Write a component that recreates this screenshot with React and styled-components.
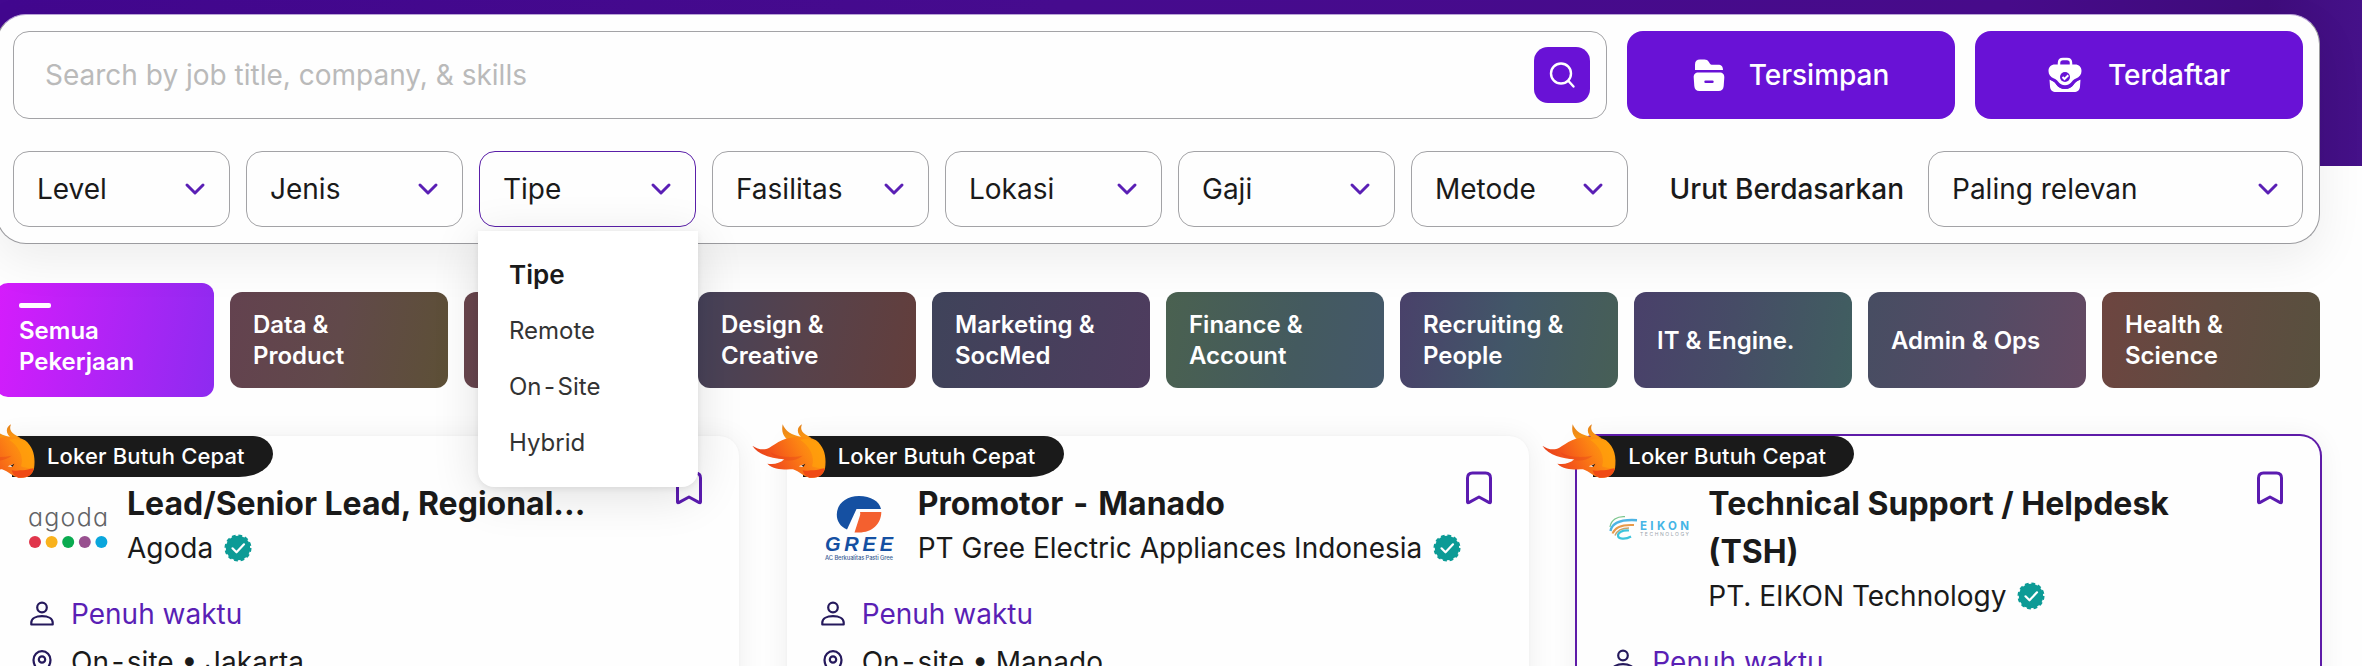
import React, { Component } from 'react';
import styled, { createGlobalStyle } from 'styled-components';

const filters = ['Level', 'Jenis', 'Tipe', 'Fasilitas', 'Lokasi', 'Gaji', 'Metode'];

const filterOptions = {
  Tipe: ['Remote', 'On-Site', 'Hybrid'],
};

const categories = [
  { id: 'all', lines: ['Semua', 'Pekerjaan'], colors: '#d61cfc, #8d2bf0' },
  { id: 'data', lines: ['Data &', 'Product'], colors: '#63424f, #61494a 50%, #5d5036' },
  { id: 'other', lines: [], colors: '#69454c, #5a4a60' },
  { id: 'design', lines: ['Design &', 'Creative'], colors: '#46425a, #57424b 50%, #633e3b' },
  { id: 'marketing', lines: ['Marketing &', 'SocMed'], colors: '#3f435a, #4e3c5e' },
  { id: 'finance', lines: ['Finance &', 'Account'], colors: '#4a6150, #445a5f 60%, #44586a' },
  { id: 'recruiting', lines: ['Recruiting &', 'People'], colors: '#49416a, #425768 50%, #475f56' },
  { id: 'it', lines: ['IT & Engine.'], colors: '#49406a, #464c66 45%, #405f60' },
  { id: 'admin', lines: ['Admin & Ops'], colors: '#474d62, #534b65 50%, #644962' },
  { id: 'health', lines: ['Health &', 'Science'], colors: '#6d4540, #614b41 50%, #58503e' },
];

const jobs = [
  { id: 1, title: 'Lead/Senior Lead, Regional...', company: 'Agoda', logo: 'agoda', type: 'Penuh waktu', place: 'On-site • Jakarta' },
  { id: 2, title: 'Promotor - Manado', company: 'PT Gree Electric Appliances Indonesia', logo: 'gree', type: 'Penuh waktu', place: 'On-site • Manado' },
  { id: 3, title: 'Technical Support / Helpdesk (TSH)', company: 'PT. EIKON Technology', logo: 'eikon', type: 'Penuh waktu', highlighted: true },
];

// gives hyphens some air on both sides
const spaced = text => text.split('-').map((part, i) => (
  <React.Fragment key={i}>{i > 0 && <Hyphen>-</Hyphen>}{part}</React.Fragment>
));

const ChevronIcon = () => (
  <svg width="22" height="14" viewBox="0 0 22 14" fill="none" stroke="#5a1fb5" strokeWidth="3" strokeLinecap="round" strokeLinejoin="round">
    <path d="M3 3l8 8 8-8" />
  </svg>
);

const SearchIcon = () => (
  <svg width="28" height="28" viewBox="0 0 28 28" fill="none" stroke="#fff" strokeWidth="2.4" strokeLinecap="round">
    <circle cx="13" cy="12.5" r="10" />
    <path d="M20.5 20l5 5.5" />
  </svg>
);

const FolderIcon = () => (
  <svg width="32" height="34" viewBox="0 0 32 34" fill="#fff">
    <path d="M2 12V6.5C2 3 3.8 1.4 7 1.4h4.5c2 0 3.2.8 4.2 2.3l1.3 2c.6.8 1.2 1 2.2 1H25c3.4 0 5 1.6 5 5.3z" />
    <path fillRule="evenodd" d="M5.5 14.5h21c3.3 0 5 2 4.8 5l-.6 8.5c-.3 3.5-2 5-5.2 5h-19c-3.2 0-4.9-1.5-5.2-5l-.6-8.500c-.2-3 1.5-5 4.8-5zM12.5 22.6a1.2 1.2 0 0 0 0 2.4h7a1.2 1.2 0 0 0 0-2.4z" />
  </svg>
);

const BriefcaseIcon = () => (
  <svg width="34" height="36" viewBox="0 0 34 36">
    <path d="M11 8V6c0-2.6 1.4-4 4-4h4c2.6 0 4 1.4 4 4v2" fill="none" stroke="#fff" strokeWidth="2.5" />
    <path d="M7 7.500h20c4 0 6.5 2.5 6.5 6.5 0 3.5-2 6-5.5 7.5-1.7.8-3 1.6-4 3a8.5 8.5 0 0 1-14 0c-1-1.4-2.3-2.2-4-3C2.5 20 .5 17.5.5 14 .5 10 3 7.500 7 7.500z" fill="#fff" />
    <path d="M1.5 22.5c3 1 5.2 2.5 6.8 5 4.2 6 13.2 6 17.4 0 1.600-2.500 3.800-4 6.800-5l-.5 7c-.4 4-2.5 5.5-6 5.500H8c-3.5 0-5.6-1.5-6-5.500z" fill="#fff" />
    <path d="M1.500 21.500c3.500 1.200 6 2.800 7.600 5.300 3.800 5.400 12 5.400 15.800 0 1.600-2.500 4.100-4.100 7.600-5.300" fill="none" stroke="#6912d6" strokeWidth="2" />
    <circle cx="17" cy="20" r="5" fill="#6912d6" />
    <path d="M14.500 20l2 2 3.800-3.800" fill="none" stroke="#fff" strokeWidth="2" />
  </svg>
);

const BookmarkIcon = () => (
  <svg width="28" height="34" viewBox="0 0 28 34" fill="none" stroke="#5b1bb0" strokeWidth="3" strokeLinejoin="round">
    <path d="M2.5 31V7C2.5 3.6 4 2 7.5 2h13c3.5 0 5 1.6 5 5v24c0 .8-.6 1-1.2.6L14 26 3.7 31.6c-.6.4-1.2.2-1.2-.6z" />
  </svg>
);

const VerifiedIcon = () => (
  <svg width="28" height="28" viewBox="0 0 28 28" fill="none">
    <circle cx="14" cy="14" r="12.2" fill="#0c9b96" />
    <circle cx="14" cy="14" r="12.2" stroke="#0c9b96" strokeWidth="2.6" strokeDasharray="3.7 2.688" />
    <path d="M8.5 14.3l4 4 7.5-8" stroke="#fff" strokeWidth="2.2" strokeLinecap="round" strokeLinejoin="round" />
  </svg>
);

const PersonIcon = () => (
  <svg width="28" height="28" viewBox="0 0 28 28" fill="none" stroke="#25195c" strokeWidth="2.2" strokeLinejoin="round">
    <circle cx="14" cy="7.5" r="4.8" />
    <path d="M3.3 24.5v-2c0-4 4.5-6.3 10.7-6.3s10.7 2.3 10.7 6.3v2z" />
  </svg>
);

const PinIcon = () => (
  <svg width="28" height="28" viewBox="0 0 28 28" fill="none" stroke="#25195c" strokeWidth="2.2" strokeLinejoin="round">
    <path d="M14 26.5c-5-4.5-8.5-9-8.5-14.5 0-5 3.7-8.8 8.5-8.8s8.5 3.8 8.5 8.8c0 5.5-3.5 10-8.5 14.5z" />
    <circle cx="14" cy="11.5" r="3.2" />
  </svg>
);

const BullIcon = () => (
  <Bull viewBox="0 0 252 210">
    <defs>
      <linearGradient id="flame" x1="0" y1="0.6" x2="1" y2="0.3">
        <stop offset="0" stopColor="#e4371b" />
        <stop offset="0.35" stopColor="#f4581a" />
        <stop offset="0.7" stopColor="#fc8413" />
        <stop offset="1" stopColor="#ffa20a" />
      </linearGradient>
      <linearGradient id="horn" x1="0" y1="0" x2="0" y2="1">
        <stop offset="0" stopColor="#e2811c" />
        <stop offset="1" stopColor="#ff980f" />
      </linearGradient>
    </defs>
    <path fill="url(#horn)" d="M98 28c9 20 22 32 64 40l-42 12c-22-14-26-32-22-52z" />
    <path fill="url(#horn)" d="M156 28c-7 16 0 28 28 40l-26 2c-20-14-18-34-2-42z" />
    <path fill="url(#flame)" d="M96 76c26-12 76-16 102 0 26 20 32 52 27 85-7 22-24 29-46 27-20-3-30-19-50-25-26 1-58 2-77-17 20 3 36 0 51-13C68 130 27 122 7 92c17 11 35 15 51 6 13-7 22-15 38-22z" />
    <path fill="#ffa00c" opacity="0.7" d="M150 74c30-8 60 4 70 44 4 18 4 30 2 44-14-4-26-2-36-8 10-30-8-62-36-80z" />
    <path fill="#f04a14" d="M158 166c12 4 24-2 34 0 10 0 18-4 32-6-4 24-22 30-46 28-10-4-18-12-20-22z" />
    <path fill="#e23a1b" d="M62 112c20 14 60 18 96 10-20 14-38 18-56 12-20-4-34-10-40-22z" opacity="0.35" />
    <path fill="#fff" d="M146 154l16-6-3 8z" />
    <path fill="#2a1408" d="M154 152l12-6-5 9z" />
  </Bull>
);

const AgodaLogo = () => (
  <svg width="80" height="80" viewBox="0 0 80 80">
    <AgodaText x="0" y="38" textLength="80">agoda</AgodaText>
    {['#e0354b', '#f9b21d', '#0aab50', '#98508f', '#0aa6dc'].map((color, i) => (
      <circle key={color} cx={7 + i * 16.6} cy="54" r="6" fill={color} />
    ))}
  </svg>
);

const GreeLogo = () => (
  <svg width="80" height="80" viewBox="0 0 80 80">
    <path fill="#1550a2" d="M28 41.5C21 38.500 17.800 33 17.800 26.500 17.800 16 27 8 40 8c12 0 20.500 5.500 22 13H37.500z" />
    <path fill="#f4602f" d="M41 24h21.300C62.300 36 53 44.500 40 44.500H35.500l5-15.500c.8-2.400 1-3.500.5-5z" />
    <GreeText x="6" y="63.3" textLength="68">GREE</GreeText>
    <GreeTagline x="6" y="72" textLength="68">AC Berkualitas Pasti Gree</GreeTagline>
  </svg>
);

const EikonLogo = () => (
  <svg width="80" height="80" viewBox="0 0 80 80" fill="none">
    <path stroke="#7cc68d" strokeWidth="1.3" d="M1 39C2 32 8 28 16 28.6" />
    <path stroke="#4db4e4" strokeWidth="2.4" d="M1.5 43C3 34.5 12 31.2 28 32.2" />
    <path stroke="#e89a4a" strokeWidth="2" d="M3.5 45.5C6 39 13 36.3 25 37" />
    <path stroke="#c9a36c" strokeWidth="1.5" d="M6 47.5c2-5 6-7.5 14-7.5" />
    <path stroke="#3ec4dc" strokeWidth="2.2" d="M20 42.5c-7-.5-11 2-11 5 0 3.5 7 4.5 13 1" />
    <EikonText x="31" y="42" textLength="49">EIKON</EikonText>
    <EikonTagline x="31" y="48" textLength="49">TECHNOLOGY</EikonTagline>
  </svg>
);

const logos = {
  agoda: AgodaLogo,
  gree: GreeLogo,
  eikon: EikonLogo,
};

class FilterSelect extends Component {
  handleClick = () => this.props.onToggle(this.props.label);

  render() {
    const { label, options, open } = this.props;
    return (
      <SelectWrap>
        <Select $open={open} onClick={this.handleClick}>
          {label}
          <ChevronIcon />
        </Select>
        {open && options && <Dropdown>
          <DropdownTitle>{label}</DropdownTitle>
          {options.map(option => (
            <DropdownItem key={option}>{spaced(option)}</DropdownItem>
          ))}
        </Dropdown>}
      </SelectWrap>
    );
  }
}

const JobCard = ({ job }) => {
  const CompanyLogo = logos[job.logo];
  return (
    <Card $highlighted={job.highlighted}>
      <UrgentBadge>Loker Butuh Cepat</UrgentBadge>
      <BullIcon />
      <CardHeader>
        <Logo><CompanyLogo /></Logo>
        <CardHeading>
          <JobTitle>{spaced(job.title)}</JobTitle>
          <Company>{job.company}<VerifiedIcon /></Company>
        </CardHeading>
        <BookmarkButton><BookmarkIcon /></BookmarkButton>
      </CardHeader>
      <Meta $accent><PersonIcon />{job.type}</Meta>
      {job.place && <Meta><PinIcon /><span>{spaced(job.place)}</span></Meta>}
    </Card>
  );
};

export default class App extends Component {
  state = { openFilter: 'Tipe', category: 'all' };

  handleToggle = label => this.setState({
    openFilter: this.state.openFilter === label ? null : label,
  });

  render() {
    const { openFilter, category } = this.state;
    return (
      <Page>
        <GlobalStyle />
        <Panel>
          <PanelRow $height={88} $gap={20}>
            <SearchBox>
              <SearchInput placeholder="Search by job title, company, & skills" />
              <SearchButton><SearchIcon /></SearchButton>
            </SearchBox>
            <ActionButton $gap={24}><FolderIcon />Tersimpan</ActionButton>
            <ActionButton $gap={26}><BriefcaseIcon />Terdaftar</ActionButton>
          </PanelRow>
          <PanelRow $height={76} $gap={16}>
            {filters.map(label => (
              <FilterSelect
                key={label}
                label={label}
                options={filterOptions[label]}
                open={openFilter === label}
                onToggle={this.handleToggle}
              />
            ))}
            <SortLabel>Urut Berdasarkan</SortLabel>
            <Select $wide>Paling relevan<ChevronIcon /></Select>
          </PanelRow>
        </Panel>
        <Categories>
          {categories.map(({ id, lines, colors }) => (
            <Category
              key={id}
              $colors={colors}
              $active={category === id}
              onClick={() => this.setState({ category: id })}
            >
              {category === id && <ActiveBar />}
              {lines.map(line => <span key={line}>{line}</span>)}
            </Category>
          ))}
        </Categories>
        <Cards>
          {jobs.map(job => <JobCard key={job.id} job={job} />)}
        </Cards>
      </Page>
    );
  }
}

const GlobalStyle = createGlobalStyle`
  * {
    box-sizing: border-box;
  }
  body {
    margin: 0;
    overflow: hidden;
  }
  button, input {
    font: inherit;
    margin: 0;
    padding: 0;
    border: none;
    background: none;
  }
  svg {
    flex-shrink: 0;
  }
`;
const Page = styled.div`
  height: 666px;
  overflow: hidden;
  padding: 14px 42px 0 0;
  background: linear-gradient(90deg, #42078f, #470c90 45%, #480c8c 85%, #3f0c7c 96%, #451189) no-repeat 0 0 / 100% 166px, #fefefe;
  color: #1a1a1a;
  font-family: Inter, 'Liberation Sans', sans-serif;
  font-size: 28px;
`;
const Hyphen = styled.span`
  padding: 0 2.5px;
`;
const Panel = styled.div`
  position: relative;
  z-index: 2;
  display: flex;
  flex-direction: column;
  gap: 32px;
  width: 2324px;
  height: 230px;
  margin-left: -4px;
  padding: 16px;
  border: 1px solid #9b9b9f;
  border-top-color: #b9a3d6;
  border-radius: 30px;
  background: #fefefe;
  box-shadow: 0 16px 48px rgba(0, 0, 0, 0.07);
`;
const PanelRow = styled.div`
  display: flex;
  align-items: center;
  gap: ${p => p.$gap}px;
  height: ${p => p.$height}px;
`;
const SearchBox = styled.div`
  flex: 1;
  display: flex;
  align-items: center;
  height: 100%;
  padding: 0 16px 0 31px;
  border: 1px solid #a3a3a6;
  border-radius: 16px;
`;
const SearchInput = styled.input`
  flex: 1;
  outline: none;
  &::placeholder {
    color: #bababa;
    opacity: 1;
  }
`;
const SearchButton = styled.button`
  display: flex;
  align-items: center;
  justify-content: center;
  width: 56px;
  height: 56px;
  border-radius: 14px;
  background: #6912d6;
`;
const ActionButton = styled.button`
  display: flex;
  align-items: center;
  justify-content: center;
  gap: ${p => p.$gap}px;
  width: 328px;
  height: 100%;
  border-radius: 16px;
  background: #6912d6;
  color: #fff;
  font-weight: 500;
`;
const SelectWrap = styled.div`
  position: relative;
  height: 100%;
`;
const Select = styled.button`
  display: flex;
  align-items: center;
  justify-content: space-between;
  width: ${p => p.$wide ? 375 : 217}px;
  height: 100%;
  padding: 0 23px;
  border: 1px solid ${p => p.$open ? '#5a1fa8' : '#a3a3a6'};
  border-radius: 16px;
  color: #1a1a1a;
`;
const Dropdown = styled.div`
  position: absolute;
  top: 80px;
  left: -1px;
  width: 220px;
  padding: 16px 0;
  border-radius: 0 0 16px 16px;
  background: #fff;
  box-shadow: 0 8px 48px rgba(0, 0, 0, 0.12), 0 2px 6px rgba(0, 0, 0, 0.08);
`;
const DropdownTitle = styled.div`
  padding-left: 31px;
  font-size: 26px;
  font-weight: 600;
  line-height: 56px;
`;
const DropdownItem = styled.div`
  padding-left: 31px;
  color: #333;
  font-size: 24px;
  line-height: 56px;
`;
const SortLabel = styled.div`
  flex: 1;
  padding-right: 8px;
  text-align: right;
  font-weight: 500;
`;
const Categories = styled.div`
  display: flex;
  align-items: center;
  gap: 16px;
  width: 2324px;
  height: 114px;
  margin: 39px 0 0 -4px;
`;
const Category = styled.button`
  display: flex;
  flex-direction: column;
  justify-content: center;
  width: 218px;
  height: ${p => p.$active ? 114 : 96}px;
  padding-left: 23px;
  border-radius: 12px;
  background: linear-gradient(100deg, ${p => p.$colors});
  color: #fff;
  font-size: 24px;
  font-weight: 600;
  line-height: 31px;
  text-align: left;
`;
const ActiveBar = styled.div`
  width: 32px;
  height: 5px;
  margin-bottom: 7px;
  border-radius: 2px;
  background: #fff;
`;
const Cards = styled.div`
  display: grid;
  grid-template-columns: repeat(3, 1fr);
  gap: 48px;
  width: 2324px;
  margin: 39px 0 0 -4px;
`;
const Card = styled.div`
  position: relative;
  height: 400px;
  padding: 44px 36px 0 32px;
  border-radius: 20px;
  background: #fefefe;
  box-shadow: ${p => p.$highlighted ? '0 0 0 2px #5e1ba8, ' : ''}0 2px 28px rgba(0, 0, 0, 0.07), 0 0 3px rgba(0, 0, 0, 0.04);
`;
const UrgentBadge = styled.div`
  position: absolute;
  top: 0;
  left: 16px;
  width: 261px;
  height: 41px;
  padding-left: 35px;
  border-radius: 0 20px 34px 0 / 0 18px 23px 0;
  background: #1a1a1a;
  color: #fff;
  font-size: 22px;
  font-weight: 500;
  letter-spacing: 0.15px;
  line-height: 41px;
`;
const Bull = styled.svg`
  position: absolute;
  top: -21px;
  left: -37px;
  width: 84px;
  height: 70px;
`;
const CardHeader = styled.div`
  display: flex;
  align-items: flex-start;
  margin-bottom: 22px;
`;
const Logo = styled.div`
  flex-shrink: 0;
  width: 80px;
  height: 80px;
  margin: 8px 19px 0 0;
`;
const CardHeading = styled.div`
  flex: 1;
`;
const JobTitle = styled.div`
  font-size: 32px;
  font-weight: 700;
  line-height: 48px;
`;
const Company = styled.div`
  display: flex;
  align-items: center;
  gap: 11px;
  height: 40px;
`;
const BookmarkButton = styled.button`
  height: 34px;
  margin-top: -9px;
  svg {
    display: block;
  }
`;
const Meta = styled.div`
  display: flex;
  align-items: center;
  height: 48px;
  color: ${p => p.$accent ? '#5a1fb5' : '#1a1a1a'};
  svg {
    margin-right: 15px;
  }
`;
const AgodaText = styled.text`
  fill: #626366;
  font-size: 25px;
  font-weight: 300;
  font-feature-settings: 'cv11';
`;
const GreeText = styled.text`
  fill: #1550a2;
  font-family: 'Liberation Sans', sans-serif;
  font-size: 20px;
  font-style: italic;
  font-weight: 700;
`;
const GreeTagline = styled.text`
  fill: #3a5f94;
  font-size: 5.8px;
  font-weight: 500;
`;
const EikonText = styled.text`
  fill: #45b5e6;
  font-size: 11.5px;
  font-weight: 700;
`;
const EikonTagline = styled.text`
  fill: #9aa4ac;
  font-size: 5px;
`;
